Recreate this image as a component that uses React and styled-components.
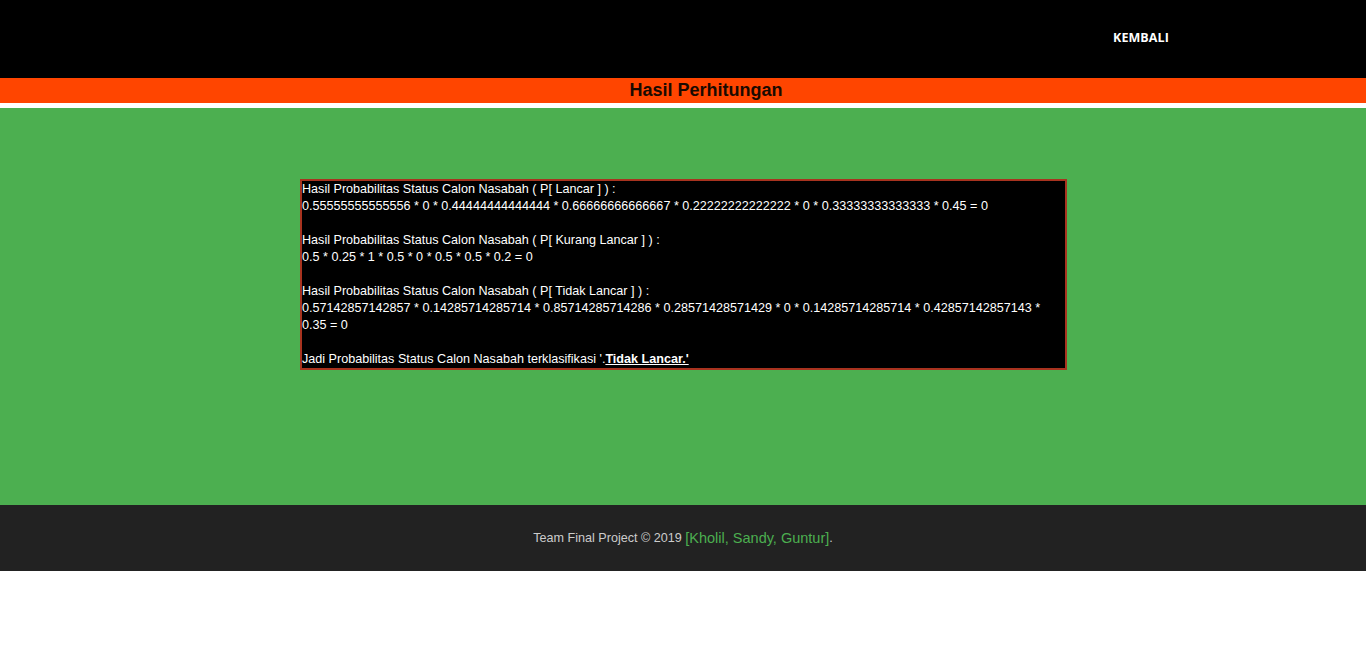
import styled, { createGlobalStyle } from "styled-components";

const GlobalStyle = createGlobalStyle`
  body {
    margin: 0;
    background: #ffffff;
    font-family: "Liberation Sans", Arial, sans-serif;
  }
`;

// bagian atas hitam dengan menu
const Header = styled.header`
  height: 78px;
  background: #000000;
  display: flex;
  justify-content: flex-end;
  align-items: center;
  padding-right: 197px;
`;

const NavLink = styled.a`
  color: #ffffff;
  font-family: "Open Sans", "Liberation Sans", sans-serif;
  font-weight: 700;
  font-size: 12.5px;
  letter-spacing: 0.1px;
  text-decoration: none;
  margin-top: -4px;
  cursor: pointer;
`;

const TitleBar = styled.div`
  height: 25px;
  background: #ff4500;
  display: flex;
  justify-content: center;
  align-items: center;
  border-bottom: 5px solid #ffffff;
`;

const Title = styled.h2`
  margin: 0 0 0 46px;
  font-size: 18px;
  font-weight: 700;
  color: #1a0a00;
`;

const Main = styled.main`
  background: #4caf50;
  padding: 71px 0 135px;
  display: flex;
  justify-content: center;
`;

const ResultBox = styled.div`
  width: 763px;
  background: #000000;
  border: 2px solid #a8331f;
  color: #ffffff;
  font-size: 12.6px;
  line-height: 17px;
  margin-left: 1px;
`;

const Result = styled.b`
  font-weight: 700;
  text-decoration: underline;
`;

const Footer = styled.footer`
  height: 66px;
  background: #222222;
  display: flex;
  justify-content: center;
  align-items: center;
  font-size: 12.6px;
  color: #cccccc;
`;

const Names = styled.span`
  color: #4caf50;
  font-size: 14.5px;
`;

const hasil = [
  {
    label: "Lancar",
    rumus:
      "0.55555555555556 * 0 * 0.44444444444444 * 0.66666666666667 * 0.22222222222222 * 0 * 0.33333333333333 * 0.45 = 0",
  },
  {
    label: "Kurang Lancar",
    rumus: "0.5 * 0.25 * 1 * 0.5 * 0 * 0.5 * 0.5 * 0.2 = 0",
  },
  {
    label: "Tidak Lancar",
    rumus:
      "0.57142857142857 * 0.14285714285714 * 0.85714285714286 * 0.28571428571429 * 0 * 0.14285714285714 * 0.42857142857143 * 0.35 = 0",
  },
];

const App = () => {
  return (
    <>
      <GlobalStyle />
      <Header>
        <NavLink>KEMBALI</NavLink>
      </Header>
      <TitleBar>
        <Title>Hasil Perhitungan</Title>
      </TitleBar>
      <Main>
        <ResultBox>
          {hasil.map((h, i) => (
            <div key={i}>
              Hasil Probabilitas Status Calon Nasabah ( P[ {h.label} ] ) :
              <br />
              {h.rumus}
              <br />
              <br />
            </div>
          ))}
          Jadi Probabilitas Status Calon Nasabah terklasifikasi '.
          <Result>Tidak Lancar.'</Result>
        </ResultBox>
      </Main>
      <Footer>
        Team Final Project © 2019&nbsp;<Names>[Kholil, Sandy, Guntur]</Names>.
      </Footer>
    </>
  );
};

export default App;
